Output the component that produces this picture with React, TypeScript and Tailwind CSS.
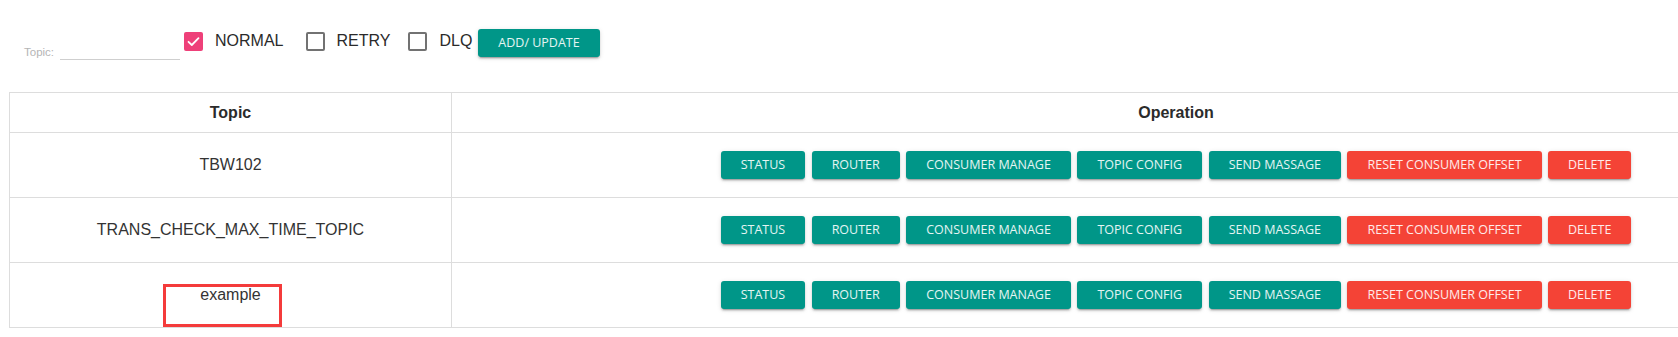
import React from 'react';
import clsx from 'clsx';

interface TopicRow {
  name: string;
  marked?: boolean;
}

const topics: TopicRow[] = [
  { name: 'TBW102' },
  { name: 'TRANS_CHECK_MAX_TIME_TOPIC' },
  { name: 'example', marked: true },
];

const operations = [
  { label: 'Status' },
  { label: 'Router' },
  { label: 'Consumer Manage' },
  { label: 'Topic Config' },
  { label: 'Send Massage' },
  { label: 'Reset Consumer Offset', danger: true },
  { label: 'Delete', danger: true },
];

function RaisedButton({ label, danger }: { label: string; danger?: boolean }) {
  return (
    <button
      className={clsx(
        'h-[28px] shrink-0 rounded-[3px] px-5 font-["Open_Sans",sans-serif] text-[12.5px] uppercase leading-none text-white/90',
        'shadow-[0_3px_1px_-2px_rgba(0,0,0,0.2),0_2px_2px_0_rgba(0,0,0,0.14),0_1px_5px_0_rgba(0,0,0,0.12)]',
        danger ? 'bg-[#f44336]' : 'bg-[#009688]'
      )}
    >
      {label}
    </button>
  );
}

function Checkbox({ label, checked, className }: { label: string; checked?: boolean; className?: string }) {
  return (
    <label className={clsx('flex items-start', className)}>
      <span
        className={clsx(
          'mt-[3px] flex h-[19px] w-[19px] items-center justify-center rounded-[2px]',
          checked ? 'bg-[#ee4079]' : 'border-2 border-[#727272] bg-white'
        )}
      >
        {checked && (
          <svg width="19" height="19" viewBox="0 0 19 19" fill="none">
            <path d="M4.5 9.8 L7.8 13 L14.5 6.2" stroke="white" strokeWidth="1.8" strokeLinecap="round" strokeLinejoin="round" />
          </svg>
        )}
      </span>
      <span className="ml-[12px] mt-[2px] text-[16px] leading-[19px] text-[#2a2a2a]">{label}</span>
    </label>
  );
}

export default function App() {
  return (
    <div className="relative h-[337px] w-full overflow-hidden bg-white font-['Liberation_Sans',Arial,sans-serif]">
      {/* filter bar */}
      <div className="flex items-start pl-[24px] pt-[29px]">
        <div className="flex h-[31px] items-end">
          <span className="mb-[2px] text-[11.5px] leading-none text-[#b5b5b5]">Topic:</span>
          <div className="ml-[6px] w-[120px] border-b border-[#cfcfcf]" />
        </div>
        <Checkbox label="NORMAL" checked className="ml-[4px]" />
        <Checkbox label="RETRY" className="ml-[22px]" />
        <Checkbox label="DLQ" className="ml-[18px]" />
        <div className="ml-[6px]">
          <RaisedButton label="Add/ Update" />
        </div>
      </div>

      {/* topic table */}
      <div className="ml-[9px] mt-[32px] w-[1892px] border-l border-r border-t border-[#dddddd] text-[16px] text-[#333333]">
        <div className="flex h-[40px] border-b border-[#dddddd] font-bold text-[#2b2b2b]">
          <div className="flex w-[442px] items-center justify-center border-r border-[#dddddd]">Topic</div>
          <div className="flex flex-1 items-center justify-center">Operation</div>
        </div>
        {topics.map((topic) => (
          <div key={topic.name} className="flex h-[65px] border-b border-[#dddddd]">
            <div className="flex w-[442px] items-center justify-center border-r border-[#dddddd]">{topic.name}</div>
            <div className="flex flex-1 items-center justify-center gap-[6.5px]">
              {operations.map((op) => (
                <RaisedButton key={op.label} label={op.label} danger={op.danger} />
              ))}
            </div>
          </div>
        ))}
      </div>

      {/* annotation box */}
      <div className="absolute left-[163px] top-[284px] h-[43px] w-[119px] border-[3px] border-[#f43b3b]" />
    </div>
  );
}
